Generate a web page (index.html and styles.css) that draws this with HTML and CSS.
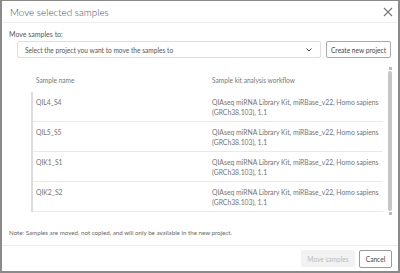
FILE: index.html
```html
<!DOCTYPE html>
<html>
<head>
<meta charset="utf-8">
<link rel="stylesheet" href="styles.css">
</head>
<body>
<div class="dialog">
  <div class="header">
    <div class="title">Move selected samples</div>
    <svg class="close" width="10" height="10" viewBox="0 0 10 10"><path d="M1 1L9 9M9 1L1 9" stroke="#777" stroke-width="1.1" fill="none"/></svg>
  </div>
  <div class="content">
    <div class="label">Move samples to:</div>
    <div class="select-row">
      <div class="select">
        <span>Select the project you want to move the samples to</span>
        <svg width="6" height="4" viewBox="0 0 6 4"><path d="M0.5 0.5L3 3L5.5 0.5" stroke="#444" stroke-width="1" fill="none"/></svg>
      </div>
      <div class="btn btn-create">Create new project</div>
    </div>
    <div class="table-area">
      <div class="table">
        <div class="thead">
          <div class="c1">Sample name</div>
          <div class="c2">Sample kit analysis workflow</div>
        </div>
        <div class="tbody">
          <div class="row"><div class="c1">QIL4_S4</div><div class="c2">QIAseq miRNA Library Kit, miRBase_v22, Homo sapiens<br>(GRCh38.103), 1.1</div></div>
          <div class="row"><div class="c1">QIL5_S5</div><div class="c2">QIAseq miRNA Library Kit, miRBase_v22, Homo sapiens<br>(GRCh38.103), 1.1</div></div>
          <div class="row"><div class="c1">QIK1_S1</div><div class="c2">QIAseq miRNA Library Kit, miRBase_v22, Homo sapiens<br>(GRCh38.103), 1.1</div></div>
          <div class="row"><div class="c1">QIK2_S2</div><div class="c2">QIAseq miRNA Library Kit, miRBase_v22, Homo sapiens<br>(GRCh38.103), 1.1</div></div>
        </div>
      </div>
      <div class="scrollbar">
        <div class="arrow"></div>
        <div class="thumb"></div>
        <div class="arrow"></div>
      </div>
    </div>
    <div class="note">Note: Samples are moved, not copied, and will only be available in the new project.</div>
  </div>
  <div class="footer">
    <div class="btn btn-disabled">Move samples</div>
    <div class="btn btn-cancel">Cancel</div>
  </div>
</div>
</body>
</html>
```
FILE: styles.css
```css
* { box-sizing: border-box; }
html, body { margin: 0; padding: 0; }
body {
  background: #8a8a8a;
  width: 400px;
  height: 273px;
  overflow: hidden;
  font-family: "Lato", "Noto Sans", sans-serif;
  color: #555;
}
.dialog {
  margin: 1px 2px 0 2px;
  width: 396px;
  height: 270px;
  background: #fff;
  display: flex;
  flex-direction: column;
}
.header {
  height: 22px;
  border-bottom: 1px solid #ececec;
  display: flex;
  align-items: center;
  justify-content: space-between;
  padding: 0 5px 0 8px;
  flex: none;
}
.title {
  font-size: 9.9px;
  font-weight: 300;
  color: #4a4a4a;
}
.close { display: block; margin-top: 1px; }
.content {
  padding: 0 6px 0 7px;
  flex: 1;
  display: flex;
  flex-direction: column;
}
.label {
  margin-top: 6px;
  height: 10px;
  line-height: 10px;
  font-size: 7px;
  color: #555;
}
.select-row {
  display: flex;
  gap: 5px;
  margin-top: 2px;
  padding-left: 8px;
}
.select {
  width: 304px;
  height: 17px;
  border: 1px solid #dedede;
  border-radius: 2px;
  display: flex;
  align-items: center;
  justify-content: space-between;
  padding: 0 8px 0 7px;
  font-size: 6.6px;
  color: #555;
}
.btn {
  height: 17px;
  border-radius: 2px;
  display: flex;
  align-items: center;
  justify-content: center;
  font-size: 6.6px;
}
.btn-create {
  width: 65px;
  border: 1px solid #a9a9a9;
  color: #444;
}
.table-area {
  display: flex;
  margin-top: 9px;
  height: 150px;
}
.table {
  margin-left: 22px;
  width: 352px;
}
.thead {
  display: flex;
  height: 25px;
  align-items: center;
  font-size: 6.6px;
  color: #777;
}
.c1 { width: 181px; padding-left: 5px; }
.c2 { flex: 1; }
.tbody {
  border-left: 2px solid #dcdcdc;
}
.row {
  display: flex;
  height: 30px;
  border-bottom: 1px solid #e9e9e9;
  padding-top: 5px;
  font-size: 6.8px;
  line-height: 10px;
  color: #747474;
}
.row .c1 { width: 179px; padding-left: 3px; }
.scrollbar {
  margin-left: 5px;
  width: 4px;
  display: flex;
  flex-direction: column;
  align-items: center;
}
.arrow {
  width: 3px;
  height: 3px;
  background: #bbb;
  flex: none;
}
.thumb {
  width: 4px;
  height: 140px;
  background: #c6c6c6;
  border-radius: 2px;
  margin: 1px 0;
}
.note {
  margin-top: 12px;
  font-size: 6.2px;
  line-height: 8px;
  color: #666;
}
.footer {
  border-top: 1px solid #ececec;
  height: 26px;
  margin-top: auto;
  display: flex;
  justify-content: flex-end;
  align-items: center;
  gap: 4px;
  padding: 0 6px 0 0;
  flex: none;
}
.btn-disabled {
  width: 54px;
  height: 17px;
  background: #f2f2f2;
  color: #bbb;
}
.btn-cancel {
  width: 33px;
  height: 18px;
  border: 1px solid #999;
  color: #444;
}
```
